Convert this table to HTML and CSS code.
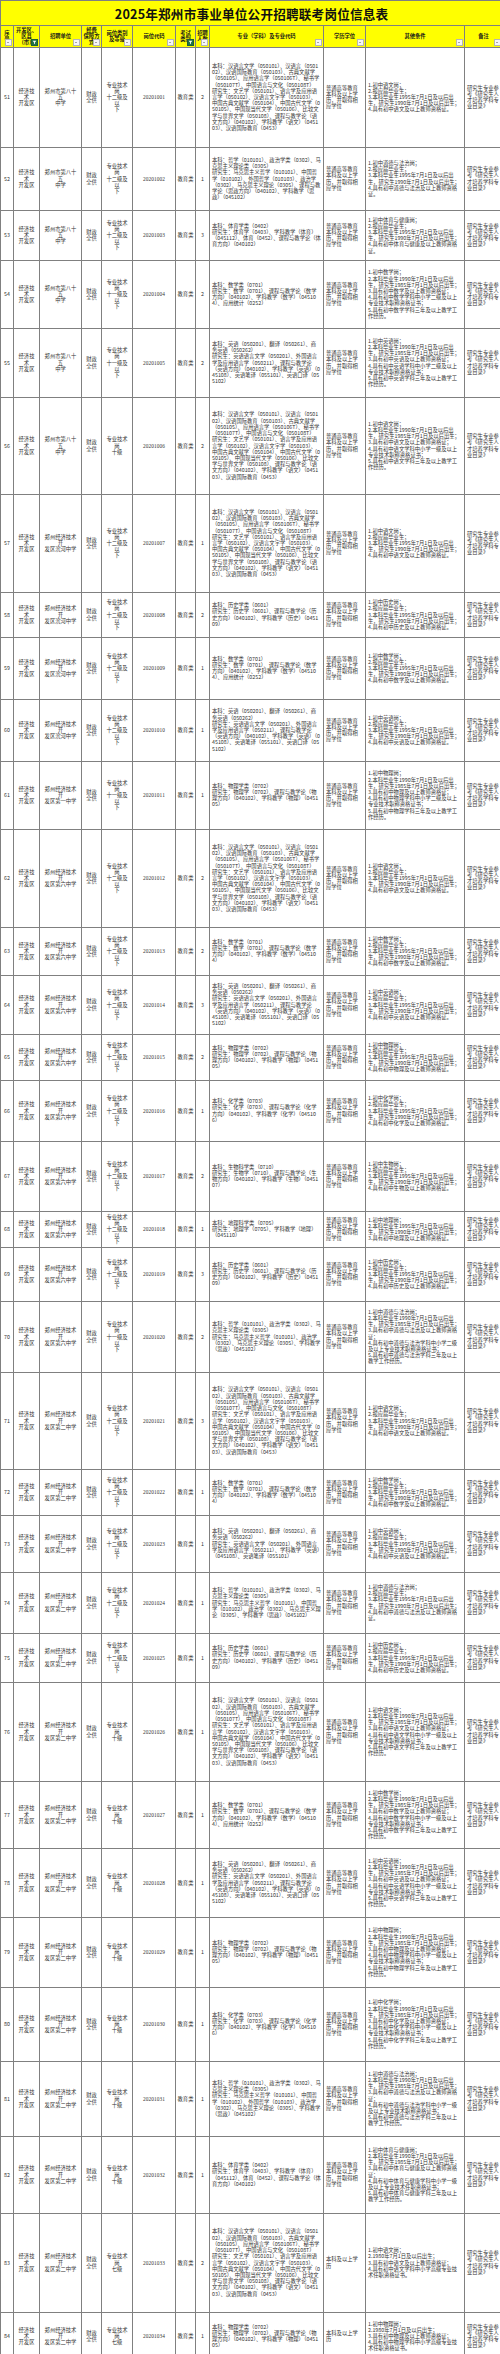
FILE: index.html
```html
<!DOCTYPE html>
<html lang="zh-CN">
<head>
<meta charset="utf-8">
<title>2025年郑州市事业单位公开招聘联考岗位信息表</title>
<link rel="stylesheet" href="styles.css">
</head>
<body>
<table class="sheet">
<colgroup>
<col class="w13"><col class="w26"><col class="w42"><col class="w20"><col class="w31"><col class="w43"><col class="w20"><col class="w14"><col class="w114"><col class="w42"><col class="w99"><col class="w38">
</colgroup>
<thead>
<tr class="title-row"><th class="title" colspan="12">2025年郑州市事业单位公开招聘联考岗位信息表</th></tr>
<tr class="head">
<th>序<br>号<span class="fb"></span></th>
<th>开发区、<br>区县<br>(市)<span class="fb on"><svg viewBox="0 0 6 6"><path d="M0.8 1H5.2L3.5 3V5L2.5 4.4V3Z" fill="#fff"/></svg></span></th>
<th>招聘单位<span class="fb"></span></th>
<th>经费<br>保障方<br>式<span class="fb"></span></th>
<th>岗位类别<br>及等级<span class="fb"></span></th>
<th>岗位代码<span class="fb"></span></th>
<th>考试<br>类别<span class="fb on"><svg viewBox="0 0 6 6"><path d="M0.8 1H5.2L3.5 3V5L2.5 4.4V3Z" fill="#fff"/></svg></span></th>
<th>招聘<br>人数<span class="fb"></span></th>
<th>专业（学科）及专业代码<span class="fb"></span></th>
<th>学历学位<span class="fb"></span></th>
<th>其他条件<span class="fb"></span></th>
<th>备注<span class="fb"></span></th>
</tr>
</thead>
<tbody>
<tr style="height:100px"><td class="c">51</td><td class="c">经济技术<br>开发区</td><td class="c">郑州市第八十五<br>中学</td><td class="c">财政<br>全供</td><td class="c">专业技术岗<br>十二级及以<br>下</td><td class="c num">20201001</td><td class="c nw">教育类</td><td class="c">2</td>
<td class="l">本科：汉语言文学（050101）、汉语言（050102）、汉语国际教育（050103）、古典文献学（050105）、应用语言学（050106T）、秘书学（050107T）、中国语言与文化（050108T）<br>研究生：文艺学（050101）、语言学及应用语言学（050102）、汉语言文字学（050103）、中国古典文献学（050104）、中国古代文学（050105）、中国现当代文学（050106）、比较文学与世界文学（050108）、课程与教学论（语文方向）（040102）、学科教学（语文）（045103）、汉语国际教育（0453）</td>
<td class="l">普通高等教育本科及以上学历，并取得相应学位</td>
<td class="l">1.初中语文岗；<br>2.报应届毕业生；<br>3.本科毕业生1995年7月1日及以后出生，研究生1990年7月1日及以后出生；<br>4.具有初中语文及以上教师资格证。</td>
<td class="l">研究生专业参考《研究生人才培养学科专业目录》</td></tr>

<tr style="height:63px"><td class="c">52</td><td class="c">经济技术<br>开发区</td><td class="c">郑州市第八十五<br>中学</td><td class="c">财政<br>全供</td><td class="c">专业技术岗<br>十二级及以<br>下</td><td class="c num">20201002</td><td class="c nw">教育类</td><td class="c">1</td>
<td class="l">本科：哲学（010101）、政治学类（0302）、马克思主义理论类（0305）<br>研究生：马克思主义哲学（010101）、中国哲学（010102）、外国哲学（010103）、政治学（0302）、马克思主义理论（0305）、课程与教学论（思政方向）（040102）、学科教学（思政）（045102）</td>
<td class="l">普通高等教育本科及以上学历，并取得相应学位</td>
<td class="l">1.初中道德与法治岗；<br>2.报应届毕业生；<br>3.本科毕业生1995年7月1日及以后出生，研究生1990年7月1日及以后出生；<br>4.具有初中道德与法治及以上教师资格证。</td>
<td class="l">研究生专业参考《研究生人才培养学科专业目录》</td></tr>

<tr style="height:50px"><td class="c">53</td><td class="c">经济技术<br>开发区</td><td class="c">郑州市第八十五<br>中学</td><td class="c">财政<br>全供</td><td class="c">专业技术岗<br>十二级及以<br>下</td><td class="c num">20201003</td><td class="c nw">教育类</td><td class="c">3</td>
<td class="l">本科：体育学类（0402）<br>研究生：体育学（0403）、学科教学（体育）（045112）、体育（0452）、课程与教学论（体育方向）（040102）</td>
<td class="l">普通高等教育本科及以上学历，并取得相应学位</td>
<td class="l">1.初中体育与健康岗；<br>2.报应届毕业生；<br>3.本科毕业生1995年7月1日及以后出生，研究生1990年7月1日及以后出生；<br>4.具有初中体育与健康及以上教师资格证。</td>
<td class="l">研究生专业参考《研究生人才培养学科专业目录》</td></tr>

<tr style="height:68px"><td class="c">54</td><td class="c">经济技术<br>开发区</td><td class="c">郑州市第八十五<br>中学</td><td class="c">财政<br>全供</td><td class="c">专业技术岗<br>十一级及以<br>下</td><td class="c num">20201004</td><td class="c nw">教育类</td><td class="c">2</td>
<td class="l">本科：数学类（0701）<br>研究生：数学（0701）、课程与教学论（数学方向）（040102）、学科教学（数学）（045104）、应用统计（0252）</td>
<td class="l">普通高等教育本科及以上学历，并取得相应学位</td>
<td class="l">1.初中数学岗；<br>2.本科毕业生1990年7月1日及以后出生，研究生1985年7月1日及以后出生；<br>3.具有初中数学及以上教师资格证；<br>4.具有初中数学学科中小学二级及以上专业技术职称资格证书；<br>5.具有初中数学学科三年及以上教学工作经历。</td>
<td class="l">研究生专业参考《研究生人才培养学科专业目录》</td></tr>

<tr style="height:69px"><td class="c">55</td><td class="c">经济技术<br>开发区</td><td class="c">郑州市第八十五<br>中学</td><td class="c">财政<br>全供</td><td class="c">专业技术岗<br>十一级及以<br>下</td><td class="c num">20201005</td><td class="c nw">教育类</td><td class="c">2</td>
<td class="l">本科：英语（050201）、翻译（050261）、商务英语（050262）<br>研究生：英语语言文学（050201）、外国语言学及应用语言学（050211）、课程与教学论（英语方向）（040102）、学科教学（英语）（045108）、英语笔译（055101）、英语口译（055102）</td>
<td class="l">普通高等教育本科及以上学历，并取得相应学位</td>
<td class="l">1.初中英语岗；<br>2.本科毕业生1990年7月1日及以后出生，研究生1985年7月1日及以后出生；<br>3.具有初中英语及以上教师资格证；<br>4.具有初中英语学科中小学二级及以上专业技术职称资格证书；<br>5.具有初中英语学科三年及以上教学工作经历。</td>
<td class="l">研究生专业参考《研究生人才培养学科专业目录》</td></tr>

<tr style="height:97px"><td class="c">56</td><td class="c">经济技术<br>开发区</td><td class="c">郑州市第八十五<br>中学</td><td class="c">财政<br>全供</td><td class="c">专业技术岗<br>十级</td><td class="c num">20201006</td><td class="c nw">教育类</td><td class="c">2</td>
<td class="l">本科：汉语言文学（050101）、汉语言（050102）、汉语国际教育（050103）、古典文献学（050105）、应用语言学（050106T）、秘书学（050107T）、中国语言与文化（050108T）<br>研究生：文艺学（050101）、语言学及应用语言学（050102）、汉语言文字学（050103）、中国古典文献学（050104）、中国古代文学（050105）、中国现当代文学（050106）、比较文学与世界文学（050108）、课程与教学论（语文方向）（040102）、学科教学（语文）（045103）、汉语国际教育（0453）</td>
<td class="l">普通高等教育本科及以上学历，并取得相应学位</td>
<td class="l">1.初中语文岗；<br>2.本科毕业生1990年7月1日及以后出生，研究生1985年7月1日及以后出生；<br>3.具有初中语文及以上教师资格证；<br>4.具有初中语文学科中小学一级及以上专业技术职称资格证书；<br>5.具有初中语文学科三年及以上教学工作经历。</td>
<td class="l">研究生专业参考《研究生人才培养学科专业目录》</td></tr>

<tr style="height:98px"><td class="c">57</td><td class="c">经济技术<br>开发区</td><td class="c">郑州经济技术开<br>发区滨河中学</td><td class="c">财政<br>全供</td><td class="c">专业技术岗<br>十二级及以<br>下</td><td class="c num">20201007</td><td class="c nw">教育类</td><td class="c">1</td>
<td class="l">本科：汉语言文学（050101）、汉语言（050102）、汉语国际教育（050103）、古典文献学（050105）、应用语言学（050106T）、秘书学（050107T）、中国语言与文化（050108T）<br>研究生：文艺学（050101）、语言学及应用语言学（050102）、汉语言文字学（050103）、中国古典文献学（050104）、中国古代文学（050105）、中国现当代文学（050106）、比较文学与世界文学（050108）、课程与教学论（语文方向）（040102）、学科教学（语文）（045103）、汉语国际教育（0453）</td>
<td class="l">普通高等教育本科及以上学历，并取得相应学位</td>
<td class="l">1.初中语文岗；<br>2.报应届毕业生；<br>3.本科毕业生1995年7月1日及以后出生，研究生1990年7月1日及以后出生；<br>4.具有初中语文及以上教师资格证。</td>
<td class="l">研究生专业参考《研究生人才培养学科专业目录》</td></tr>

<tr style="height:45px"><td class="c">58</td><td class="c">经济技术<br>开发区</td><td class="c">郑州经济技术开<br>发区滨河中学</td><td class="c">财政<br>全供</td><td class="c">专业技术岗<br>十二级及以<br>下</td><td class="c num">20201008</td><td class="c nw">教育类</td><td class="c">2</td>
<td class="l">本科：历史学类（0601）<br>研究生：历史学（0601）、课程与教学论（历史方向）（040102）、学科教学（历史）（045109）</td>
<td class="l">普通高等教育本科及以上学历，并取得相应学位</td>
<td class="l">1.初中历史岗；<br>2.报应届毕业生；<br>3.本科毕业生1995年7月1日及以后出生，研究生1990年7月1日及以后出生；<br>4.具有初中历史及以上教师资格证。</td>
<td class="l">研究生专业参考《研究生人才培养学科专业目录》</td></tr>

<tr style="height:62px"><td class="c">59</td><td class="c">经济技术<br>开发区</td><td class="c">郑州经济技术开<br>发区滨河中学</td><td class="c">财政<br>全供</td><td class="c">专业技术岗<br>十二级及以<br>下</td><td class="c num">20201009</td><td class="c nw">教育类</td><td class="c">1</td>
<td class="l">本科：数学类（0701）<br>研究生：数学（0701）、课程与教学论（数学方向）（040102）、学科教学（数学）（045104）、应用统计（0252）</td>
<td class="l">普通高等教育本科及以上学历，并取得相应学位</td>
<td class="l">1.初中数学岗；<br>2.报应届毕业生；<br>3.本科毕业生1995年7月1日及以后出生，研究生1990年7月1日及以后出生；<br>4.具有初中数学及以上教师资格证。</td>
<td class="l">研究生专业参考《研究生人才培养学科专业目录》</td></tr>

<tr style="height:62px"><td class="c">60</td><td class="c">经济技术<br>开发区</td><td class="c">郑州经济技术开<br>发区滨河中学</td><td class="c">财政<br>全供</td><td class="c">专业技术岗<br>十二级及以<br>下</td><td class="c num">20201010</td><td class="c nw">教育类</td><td class="c">1</td>
<td class="l">本科：英语（050201）、翻译（050261）、商务英语（050262）<br>研究生：英语语言文学（050201）、外国语言学及应用语言学（050211）、课程与教学论（英语方向）（040102）、学科教学（英语）（045108）、英语笔译（055101）、英语口译（055102）</td>
<td class="l">普通高等教育本科及以上学历，并取得相应学位</td>
<td class="l">1.初中英语岗；<br>2.报应届毕业生；<br>3.本科毕业生1995年7月1日及以后出生，研究生1990年7月1日及以后出生；<br>4.具有初中英语及以上教师资格证。</td>
<td class="l">研究生专业参考《研究生人才培养学科专业目录》</td></tr>

<tr style="height:68px"><td class="c">61</td><td class="c">经济技术<br>开发区</td><td class="c">郑州经济技术开<br>发区第一中学</td><td class="c">财政<br>全供</td><td class="c">专业技术岗<br>十一级及以<br>下</td><td class="c num">20201011</td><td class="c nw">教育类</td><td class="c">1</td>
<td class="l">本科：物理学类（0702）<br>研究生：物理学（0702）、课程与教学论（物理方向）（040102）、学科教学（物理）（045105）</td>
<td class="l">普通高等教育本科及以上学历，并取得相应学位</td>
<td class="l">1.初中物理岗；<br>2.本科毕业生1990年7月1日及以后出生，研究生1985年7月1日及以后出生；<br>3.具有初中物理及以上教师资格证；<br>4.具有初中物理学科中小学二级及以上专业技术职称资格证书；<br>5.具有初中物理学科三年及以上教学工作经历。</td>
<td class="l">研究生专业参考《研究生人才培养学科专业目录》</td></tr>

<tr style="height:98px"><td class="c">62</td><td class="c">经济技术<br>开发区</td><td class="c">郑州经济技术开<br>发区第六中学</td><td class="c">财政<br>全供</td><td class="c">专业技术岗<br>十二级及以<br>下</td><td class="c num">20201012</td><td class="c nw">教育类</td><td class="c">2</td>
<td class="l">本科：汉语言文学（050101）、汉语言（050102）、汉语国际教育（050103）、古典文献学（050105）、应用语言学（050106T）、秘书学（050107T）、中国语言与文化（050108T）<br>研究生：文艺学（050101）、语言学及应用语言学（050102）、汉语言文字学（050103）、中国古典文献学（050104）、中国古代文学（050105）、中国现当代文学（050106）、比较文学与世界文学（050108）、课程与教学论（语文方向）（040102）、学科教学（语文）（045103）、汉语国际教育（0453）</td>
<td class="l">普通高等教育本科及以上学历，并取得相应学位</td>
<td class="l">1.初中语文岗；<br>2.报应届毕业生；<br>3.本科毕业生1995年7月1日及以后出生，研究生1990年7月1日及以后出生；<br>4.具有初中语文及以上教师资格证。</td>
<td class="l">研究生专业参考《研究生人才培养学科专业目录》</td></tr>

<tr style="height:48px"><td class="c">63</td><td class="c">经济技术<br>开发区</td><td class="c">郑州经济技术开<br>发区第六中学</td><td class="c">财政<br>全供</td><td class="c">专业技术岗<br>十二级及以<br>下</td><td class="c num">20201013</td><td class="c nw">教育类</td><td class="c">2</td>
<td class="l">本科：数学类（0701）<br>研究生：数学（0701）、课程与教学论（数学方向）（040102）、学科教学（数学）（045104）</td>
<td class="l">普通高等教育本科及以上学历，并取得相应学位</td>
<td class="l">1.初中数学岗；<br>2.报应届毕业生；<br>3.本科毕业生1995年7月1日及以后出生，研究生1990年7月1日及以后出生；<br>4.具有初中数学及以上教师资格证。</td>
<td class="l">研究生专业参考《研究生人才培养学科专业目录》</td></tr>

<tr style="height:59px"><td class="c">64</td><td class="c">经济技术<br>开发区</td><td class="c">郑州经济技术开<br>发区第六中学</td><td class="c">财政<br>全供</td><td class="c">专业技术岗<br>十二级及以<br>下</td><td class="c num">20201014</td><td class="c nw">教育类</td><td class="c">3</td>
<td class="l">本科：英语（050201）、翻译（050261）、商务英语（050262）<br>研究生：英语语言文学（050201）、外国语言学及应用语言学（050211）、课程与教学论（英语方向）（040102）、学科教学（英语）（045108）、英语笔译（055101）、英语口译（055102）</td>
<td class="l">普通高等教育本科及以上学历，并取得相应学位</td>
<td class="l">1.初中英语岗；<br>2.报应届毕业生；<br>3.本科毕业生1995年7月1日及以后出生，研究生1990年7月1日及以后出生；<br>4.具有初中英语及以上教师资格证。</td>
<td class="l">研究生专业参考《研究生人才培养学科专业目录》</td></tr>

<tr style="height:46px"><td class="c">65</td><td class="c">经济技术<br>开发区</td><td class="c">郑州经济技术开<br>发区第六中学</td><td class="c">财政<br>全供</td><td class="c">专业技术岗<br>十二级及以<br>下</td><td class="c num">20201015</td><td class="c nw">教育类</td><td class="c">2</td>
<td class="l">本科：物理学类（0702）<br>研究生：物理学（0702）、课程与教学论（物理方向）（040102）、学科教学（物理）（045105）</td>
<td class="l">普通高等教育本科及以上学历，并取得相应学位</td>
<td class="l">1.初中物理岗；<br>2.报应届毕业生；<br>3.本科毕业生1995年7月1日及以后出生，研究生1990年7月1日及以后出生；<br>4.具有初中物理及以上教师资格证。</td>
<td class="l">研究生专业参考《研究生人才培养学科专业目录》</td></tr>

<tr style="height:61px"><td class="c">66</td><td class="c">经济技术<br>开发区</td><td class="c">郑州经济技术开<br>发区第六中学</td><td class="c">财政<br>全供</td><td class="c">专业技术岗<br>十二级及以<br>下</td><td class="c num">20201016</td><td class="c nw">教育类</td><td class="c">1</td>
<td class="l">本科：化学类（0703）<br>研究生：化学（0703）、课程与教学论（化学方向）（040102）、学科教学（化学）（045106）</td>
<td class="l">普通高等教育本科及以上学历，并取得相应学位</td>
<td class="l">1.初中化学岗；<br>2.报应届毕业生；<br>3.本科毕业生1995年7月1日及以后出生，研究生1990年7月1日及以后出生；<br>4.具有初中化学及以上教师资格证。</td>
<td class="l">研究生专业参考《研究生人才培养学科专业目录》</td></tr>

<tr style="height:70px"><td class="c">67</td><td class="c">经济技术<br>开发区</td><td class="c">郑州经济技术开<br>发区第六中学</td><td class="c">财政<br>全供</td><td class="c">专业技术岗<br>十二级及以<br>下</td><td class="c num">20201017</td><td class="c nw">教育类</td><td class="c">2</td>
<td class="l">本科：生物科学类（0710）<br>研究生：生物学（0710）、课程与教学论（生物方向）（040102）、学科教学（生物）（045107）</td>
<td class="l">普通高等教育本科及以上学历，并取得相应学位</td>
<td class="l">1.初中生物岗；<br>2.报应届毕业生；<br>3.本科毕业生1995年7月1日及以后出生，研究生1990年7月1日及以后出生；<br>4.具有初中生物及以上教师资格证。</td>
<td class="l">研究生专业参考《研究生人才培养学科专业目录》</td></tr>

<tr style="height:36px"><td class="c">68</td><td class="c">经济技术<br>开发区</td><td class="c">郑州经济技术开<br>发区第六中学</td><td class="c">财政<br>全供</td><td class="c">专业技术岗<br>十二级及以<br>下</td><td class="c num">20201018</td><td class="c nw">教育类</td><td class="c">1</td>
<td class="l">本科：地理科学类（0705）<br>研究生：地理学（0705）、学科教学（地理）（045110）</td>
<td class="l">普通高等教育本科及以上学历，并取得相应学位</td>
<td class="l">1.初中地理岗；<br>2.本科毕业生1995年7月1日及以后出生，研究生1990年7月1日及以后出生；<br>3.具有初中地理及以上教师资格证。</td>
<td class="l">研究生专业参考《研究生人才培养学科专业目录》</td></tr>

<tr style="height:54px"><td class="c">69</td><td class="c">经济技术<br>开发区</td><td class="c">郑州经济技术开<br>发区第六中学</td><td class="c">财政<br>全供</td><td class="c">专业技术岗<br>十二级及以<br>下</td><td class="c num">20201019</td><td class="c nw">教育类</td><td class="c">3</td>
<td class="l">本科：历史学类（0601）<br>研究生：历史学（0601）、课程与教学论（历史方向）（040102）、学科教学（历史）（045109）</td>
<td class="l">普通高等教育本科及以上学历，并取得相应学位</td>
<td class="l">1.初中历史岗；<br>2.报应届毕业生；<br>3.本科毕业生1995年7月1日及以后出生，研究生1990年7月1日及以后出生；<br>4.具有初中历史及以上教师资格证。</td>
<td class="l">研究生专业参考《研究生人才培养学科专业目录》</td></tr>

<tr style="height:71px"><td class="c">70</td><td class="c">经济技术<br>开发区</td><td class="c">郑州经济技术开<br>发区第六中学</td><td class="c">财政<br>全供</td><td class="c">专业技术岗<br>十一级及以<br>下</td><td class="c num">20201020</td><td class="c nw">教育类</td><td class="c">2</td>
<td class="l">本科：哲学（010101）、政治学类（0302）、马克思主义理论类（0305）<br>研究生：马克思主义哲学（010101）、政治学（0302）、马克思主义理论（0305）、学科教学（思政）（045102）</td>
<td class="l">普通高等教育本科及以上学历，并取得相应学位</td>
<td class="l">1.初中道德与法治岗；<br>2.本科毕业生1990年7月1日及以后出生，研究生1985年7月1日及以后出生；<br>3.具有初中道德与法治及以上教师资格证；<br>4.具有初中道德与法治学科中小学二级及以上专业技术职称资格证书；<br>5.具有初中道德与法治学科三年及以上教学工作经历。</td>
<td class="l">研究生专业参考《研究生人才培养学科专业目录》</td></tr>

<tr style="height:97px"><td class="c">71</td><td class="c">经济技术<br>开发区</td><td class="c">郑州经济技术开<br>发区第二中学</td><td class="c">财政<br>全供</td><td class="c">专业技术岗<br>十二级及以<br>下</td><td class="c num">20201021</td><td class="c nw">教育类</td><td class="c">3</td>
<td class="l">本科：汉语言文学（050101）、汉语言（050102）、汉语国际教育（050103）、古典文献学（050105）、应用语言学（050106T）、秘书学（050107T）、中国语言与文化（050108T）<br>研究生：文艺学（050101）、语言学及应用语言学（050102）、汉语言文字学（050103）、中国古典文献学（050104）、中国古代文学（050105）、中国现当代文学（050106）、比较文学与世界文学（050108）、课程与教学论（语文方向）（040102）、学科教学（语文）（045103）、汉语国际教育（0453）</td>
<td class="l">普通高等教育本科及以上学历，并取得相应学位</td>
<td class="l">1.初中语文岗；<br>2.报应届毕业生；<br>3.本科毕业生1995年7月1日及以后出生，研究生1990年7月1日及以后出生；<br>4.具有初中语文及以上教师资格证。</td>
<td class="l">研究生专业参考《研究生人才培养学科专业目录》</td></tr>

<tr style="height:46px"><td class="c">72</td><td class="c">经济技术<br>开发区</td><td class="c">郑州经济技术开<br>发区第二中学</td><td class="c">财政<br>全供</td><td class="c">专业技术岗<br>十二级及以<br>下</td><td class="c num">20201022</td><td class="c nw">教育类</td><td class="c">1</td>
<td class="l">本科：数学类（0701）<br>研究生：数学（0701）、课程与教学论（数学方向）（040102）、学科教学（数学）（045104）</td>
<td class="l">普通高等教育本科及以上学历，并取得相应学位</td>
<td class="l">1.初中数学岗；<br>2.报应届毕业生；<br>3.本科毕业生1995年7月1日及以后出生，研究生1990年7月1日及以后出生；<br>4.具有初中数学及以上教师资格证。</td>
<td class="l">研究生专业参考《研究生人才培养学科专业目录》</td></tr>

<tr style="height:57px"><td class="c">73</td><td class="c">经济技术<br>开发区</td><td class="c">郑州经济技术开<br>发区第二中学</td><td class="c">财政<br>全供</td><td class="c">专业技术岗<br>十二级及以<br>下</td><td class="c num">20201023</td><td class="c nw">教育类</td><td class="c">1</td>
<td class="l">本科：英语（050201）、翻译（050261）、商务英语（050262）<br>研究生：英语语言文学（050201）、外国语言学及应用语言学（050211）、学科教学（英语）（045108）、英语笔译（055101）</td>
<td class="l">普通高等教育本科及以上学历，并取得相应学位</td>
<td class="l">1.初中英语岗；<br>2.报应届毕业生；<br>3.本科毕业生1995年7月1日及以后出生，研究生1990年7月1日及以后出生；<br>4.具有初中英语及以上教师资格证。</td>
<td class="l">研究生专业参考《研究生人才培养学科专业目录》</td></tr>

<tr style="height:61px"><td class="c">74</td><td class="c">经济技术<br>开发区</td><td class="c">郑州经济技术开<br>发区第二中学</td><td class="c">财政<br>全供</td><td class="c">专业技术岗<br>十二级及以<br>下</td><td class="c num">20201024</td><td class="c nw">教育类</td><td class="c">1</td>
<td class="l">本科：哲学（010101）、政治学类（0302）、马克思主义理论类（0305）<br>研究生：马克思主义哲学（010101）、中国哲学（010102）、政治学（0302）、马克思主义理论（0305）、学科教学（思政）（045102）</td>
<td class="l">普通高等教育本科及以上学历，并取得相应学位</td>
<td class="l">1.初中道德与法治岗；<br>2.报应届毕业生；<br>3.本科毕业生1995年7月1日及以后出生，研究生1990年7月1日及以后出生；<br>4.具有初中道德与法治及以上教师资格证。</td>
<td class="l">研究生专业参考《研究生人才培养学科专业目录》</td></tr>

<tr style="height:49px"><td class="c">75</td><td class="c">经济技术<br>开发区</td><td class="c">郑州经济技术开<br>发区第二中学</td><td class="c">财政<br>全供</td><td class="c">专业技术岗<br>十二级及以<br>下</td><td class="c num">20201025</td><td class="c nw">教育类</td><td class="c">1</td>
<td class="l">本科：历史学类（0601）<br>研究生：历史学（0601）、课程与教学论（历史方向）（040102）、学科教学（历史）（045109）</td>
<td class="l">普通高等教育本科及以上学历，并取得相应学位</td>
<td class="l">1.初中历史岗；<br>2.报应届毕业生；<br>3.本科毕业生1995年7月1日及以后出生，研究生1990年7月1日及以后出生；<br>4.具有初中历史及以上教师资格证。</td>
<td class="l">研究生专业参考《研究生人才培养学科专业目录》</td></tr>

<tr style="height:99px"><td class="c">76</td><td class="c">经济技术<br>开发区</td><td class="c">郑州经济技术开<br>发区第二中学</td><td class="c">财政<br>全供</td><td class="c">专业技术岗<br>十级</td><td class="c num">20201026</td><td class="c nw">教育类</td><td class="c">1</td>
<td class="l">本科：汉语言文学（050101）、汉语言（050102）、汉语国际教育（050103）、古典文献学（050105）、应用语言学（050106T）、秘书学（050107T）、中国语言与文化（050108T）<br>研究生：文艺学（050101）、语言学及应用语言学（050102）、汉语言文字学（050103）、中国古典文献学（050104）、中国古代文学（050105）、中国现当代文学（050106）、比较文学与世界文学（050108）、课程与教学论（语文方向）（040102）、学科教学（语文）（045103）、汉语国际教育（0453）</td>
<td class="l">普通高等教育本科及以上学历，并取得相应学位</td>
<td class="l">1.初中语文岗；<br>2.本科毕业生1990年7月1日及以后出生，研究生1985年7月1日及以后出生；<br>3.具有初中语文及以上教师资格证；<br>4.具有初中语文学科中小学一级及以上专业技术职称资格证书；<br>5.具有初中语文学科三年及以上教学工作经历。</td>
<td class="l">研究生专业参考《研究生人才培养学科专业目录》</td></tr>

<tr style="height:67px"><td class="c">77</td><td class="c">经济技术<br>开发区</td><td class="c">郑州经济技术开<br>发区第二中学</td><td class="c">财政<br>全供</td><td class="c">专业技术岗<br>十级</td><td class="c num">20201027</td><td class="c nw">教育类</td><td class="c">1</td>
<td class="l">本科：数学类（0701）<br>研究生：数学（0701）、课程与教学论（数学方向）（040102）、学科教学（数学）（045104）、应用统计（0252）</td>
<td class="l">普通高等教育本科及以上学历，并取得相应学位</td>
<td class="l">1.初中数学岗；<br>2.本科毕业生1990年7月1日及以后出生，研究生1985年7月1日及以后出生；<br>3.具有初中数学及以上教师资格证；<br>4.具有初中数学学科中小学一级及以上专业技术职称资格证书；<br>5.具有初中数学学科三年及以上教学工作经历。</td>
<td class="l">研究生专业参考《研究生人才培养学科专业目录》</td></tr>

<tr style="height:69px"><td class="c">78</td><td class="c">经济技术<br>开发区</td><td class="c">郑州经济技术开<br>发区第二中学</td><td class="c">财政<br>全供</td><td class="c">专业技术岗<br>十级</td><td class="c num">20201028</td><td class="c nw">教育类</td><td class="c">1</td>
<td class="l">本科：英语（050201）、翻译（050261）、商务英语（050262）<br>研究生：英语语言文学（050201）、外国语言学及应用语言学（050211）、课程与教学论（英语方向）（040102）、学科教学（英语）（045108）、英语笔译（055101）、英语口译（055102）</td>
<td class="l">普通高等教育本科及以上学历，并取得相应学位</td>
<td class="l">1.初中英语岗；<br>2.本科毕业生1990年7月1日及以后出生，研究生1985年7月1日及以后出生；<br>3.具有初中英语及以上教师资格证；<br>4.具有初中英语学科中小学一级及以上专业技术职称资格证书；<br>5.具有初中英语学科三年及以上教学工作经历。</td>
<td class="l">研究生专业参考《研究生人才培养学科专业目录》</td></tr>

<tr style="height:70px"><td class="c">79</td><td class="c">经济技术<br>开发区</td><td class="c">郑州经济技术开<br>发区第二中学</td><td class="c">财政<br>全供</td><td class="c">专业技术岗<br>十级</td><td class="c num">20201029</td><td class="c nw">教育类</td><td class="c">1</td>
<td class="l">本科：物理学类（0702）<br>研究生：物理学（0702）、课程与教学论（物理方向）（040102）、学科教学（物理）（045105）</td>
<td class="l">普通高等教育本科及以上学历，并取得相应学位</td>
<td class="l">1.初中物理岗；<br>2.本科毕业生1990年7月1日及以后出生，研究生1985年7月1日及以后出生；<br>3.具有初中物理及以上教师资格证；<br>4.具有初中物理学科中小学一级及以上专业技术职称资格证书；<br>5.具有初中物理学科三年及以上教学工作经历。</td>
<td class="l">研究生专业参考《研究生人才培养学科专业目录》</td></tr>

<tr style="height:74px"><td class="c">80</td><td class="c">经济技术<br>开发区</td><td class="c">郑州经济技术开<br>发区第二中学</td><td class="c">财政<br>全供</td><td class="c">专业技术岗<br>十级</td><td class="c num">20201030</td><td class="c nw">教育类</td><td class="c">1</td>
<td class="l">本科：化学类（0703）<br>研究生：化学（0703）、课程与教学论（化学方向）（040102）、学科教学（化学）（045106）</td>
<td class="l">普通高等教育本科及以上学历，并取得相应学位</td>
<td class="l">1.初中化学岗；<br>2.本科毕业生1990年7月1日及以后出生，研究生1985年7月1日及以后出生；<br>3.具有初中化学及以上教师资格证；<br>4.具有初中化学学科中小学一级及以上专业技术职称资格证书；<br>5.具有初中化学学科三年及以上教学工作经历。</td>
<td class="l">研究生专业参考《研究生人才培养学科专业目录》</td></tr>

<tr style="height:75px"><td class="c">81</td><td class="c">经济技术<br>开发区</td><td class="c">郑州经济技术开<br>发区第二中学</td><td class="c">财政<br>全供</td><td class="c">专业技术岗<br>十级</td><td class="c num">20201031</td><td class="c nw">教育类</td><td class="c">1</td>
<td class="l">本科：哲学（010101）、政治学类（0302）、马克思主义理论类（0305）<br>研究生：马克思主义哲学（010101）、中国哲学（010102）、外国哲学（010103）、政治学（0302）、马克思主义理论（0305）、学科教学（思政）（045102）</td>
<td class="l">普通高等教育本科及以上学历，并取得相应学位</td>
<td class="l">1.初中道德与法治岗；<br>2.本科毕业生1990年7月1日及以后出生，研究生1985年7月1日及以后出生；<br>3.具有初中道德与法治及以上教师资格证；<br>4.具有初中道德与法治学科中小学一级及以上专业技术职称资格证书；<br>5.具有初中道德与法治学科三年及以上教学工作经历。</td>
<td class="l">研究生专业参考《研究生人才培养学科专业目录》</td></tr>

<tr style="height:77px"><td class="c">82</td><td class="c">经济技术<br>开发区</td><td class="c">郑州经济技术开<br>发区第二中学</td><td class="c">财政<br>全供</td><td class="c">专业技术岗<br>十级</td><td class="c num">20201032</td><td class="c nw">教育类</td><td class="c">1</td>
<td class="l">本科：体育学类（0402）<br>研究生：体育学（0403）、学科教学（体育）（045112）、体育（0452）、课程与教学论（体育方向）（040102）</td>
<td class="l">普通高等教育本科及以上学历，并取得相应学位</td>
<td class="l">1.初中体育与健康岗；<br>2.本科毕业生1990年7月1日及以后出生，研究生1985年7月1日及以后出生；<br>3.具有初中体育与健康及以上教师资格证；<br>4.具有初中体育与健康学科中小学一级及以上专业技术任职资格证书；<br>5.具有初中体育与健康学科三年及以上教学工作经历。</td>
<td class="l">研究生专业参考《研究生人才培养学科专业目录》</td></tr>

<tr style="height:99px"><td class="c">83</td><td class="c">经济技术<br>开发区</td><td class="c">郑州经济技术开<br>发区第二中学</td><td class="c">财政<br>全供</td><td class="c">专业技术岗<br>七级</td><td class="c num">20201033</td><td class="c nw">教育类</td><td class="c">2</td>
<td class="l">本科：汉语言文学（050101）、汉语言（050102）、汉语国际教育（050103）、古典文献学（050105）、应用语言学（050106T）、秘书学（050107T）、中国语言与文化（050108T）<br>研究生：文艺学（050101）、语言学及应用语言学（050102）、汉语言文字学（050103）、中国古典文献学（050104）、中国古代文学（050105）、中国现当代文学（050106）、比较文学与世界文学（050108）、课程与教学论（语文方向）（040102）、学科教学（语文）（045103）、汉语国际教育（0453）</td>
<td class="l">本科及以上学历</td>
<td class="l">1.初中语文岗；<br>2.1980年7月1日及以后出生；<br>3.具有初中语文及以上教师资格证；<br>4.具有初中语文学科中小学高级专业技术任职资格证书。</td>
<td class="l">研究生专业参考《研究生人才培养学科专业目录》</td></tr>

<tr style="height:48px"><td class="c">84</td><td class="c">经济技术<br>开发区</td><td class="c">郑州经济技术开<br>发区第二中学</td><td class="c">财政<br>全供</td><td class="c">专业技术岗<br>七级</td><td class="c num">20201034</td><td class="c nw">教育类</td><td class="c">1</td>
<td class="l">本科：物理学类（0702）<br>研究生：物理学（0702）、课程与教学论（物理方向）（040102）、学科教学（物理）（045105）</td>
<td class="l">本科及以上学历</td>
<td class="l">1.初中物理岗；<br>2.1980年7月1日及以后出生；<br>3.具有初中物理及以上教师资格证；<br>4.具有初中物理学科中小学高级专业技术任职资格证书。</td>
<td class="l">研究生专业参考《研究生人才培养学科专业目录》</td></tr>
</tbody>
</table>
</body>
</html>
```
FILE: styles.css
```css
html, body {
  margin: 0;
  padding: 0;
  background: #ffffff;
}
body {
  width: 500px;
  overflow: hidden;
  font-family: "Noto Sans CJK SC", "Liberation Sans", sans-serif;
}
.sheet {
  width: 502px;
  border-collapse: collapse;
  table-layout: fixed;
}
.w13 { width: 13px; }
.w14 { width: 14px; }
.w20 { width: 20px; }
.w26 { width: 26px; }
.w31 { width: 31px; }
.w38 { width: 38px; }
.w42 { width: 42px; }
.w43 { width: 43px; }
.w99 { width: 99px; }
.w114 { width: 114px; }

.sheet th,
.sheet td {
  border: 1px solid #808080;
  font-size: 5.3px;
  line-height: 6.2px;
  padding: 1px 2px;
  vertical-align: middle;
  color: #333333;
  overflow: hidden;
  word-break: break-all;
}

.title-row { height: 25px; }
.sheet th.title {
  background: #ffff00;
  font-size: 12.6px;
  line-height: 14px;
  font-weight: 700;
  color: #111;
  text-align: center;
  letter-spacing: 0.2px;
  padding: 2px 0 0 0;
}
.head { height: 18px; }
.head th {
  background: #ffff00;
  font-weight: 700;
  color: #1a1a1a;
  text-align: center;
  position: relative;
  padding: 1px 1px;
}
.fb {
  position: absolute;
  right: 1px;
  bottom: 1px;
  width: 5px;
  height: 5px;
  background: #f6f6f6;
  border: 1px solid #b5b5b5;
  box-sizing: content-box;
}
.fb::after {
  content: "";
  position: absolute;
  left: 1px;
  top: 2px;
  border-left: 1.5px solid transparent;
  border-right: 1.5px solid transparent;
  border-top: 1.5px solid #555;
}
.fb.on {
  background: #217346;
  border-color: #1d5e3a;
}
.fb.on::after { display: none; }
.fb svg {
  display: block;
  width: 5px;
  height: 5px;
}

.c { text-align: center; }
.l { text-align: left; }
.sheet td.nw {
  white-space: nowrap;
  padding: 1px 0;
}
.num {
  font-family: "Liberation Serif", serif;
  color: #555;
  letter-spacing: 0.1px;
}
```
